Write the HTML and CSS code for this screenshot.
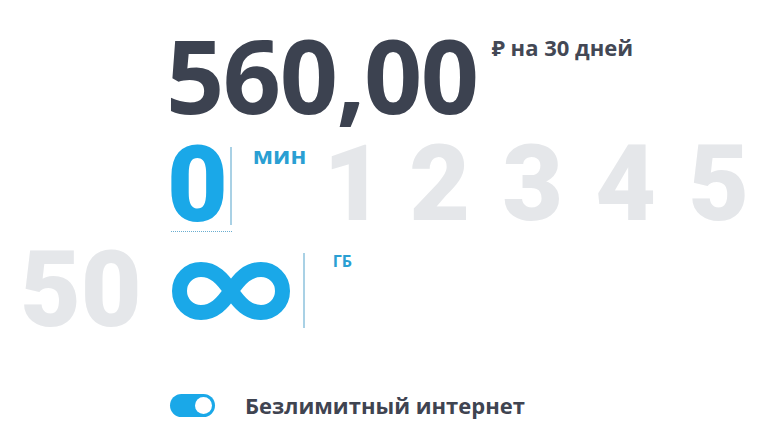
FILE: index.html
```html
<!DOCTYPE html>
<html lang="ru">
<head>
<meta charset="utf-8">
<title>Тариф</title>
<link rel="stylesheet" href="styles.css">
</head>
<body>
<div class="page">
  <div class="price-row">
    <span class="price">560,00</span>
    <span class="period">₽ на 30 дней</span>
  </div>

  <div class="picker picker-min">
    <div class="selected">
      <span class="num num-sel">0</span>
      <span class="bar"></span>
    </div>
    <span class="unit unit-min">мин</span>
    <div class="options">
      <span class="opt opt-one num">1</span>
      <span class="opt num">2</span>
      <span class="opt num">3</span>
      <span class="opt num">4</span>
      <span class="opt num">5</span>
    </div>
  </div>

  <div class="picker picker-gb">
    <span class="num num-prev">50</span>
    <span class="inf">
      <svg width="118" height="58" viewBox="0 0 118 58" aria-hidden="true">
        <path d="M59,29 C50,16 42,7.5 29,7.5 C17,7.5 7.5,17 7.5,29 C7.5,41 17,50.5 29,50.5 C42,50.5 50,42 59,29 C68,16 76,7.5 89,7.5 C101,7.5 110.5,17 110.5,29 C110.5,41 101,50.5 89,50.5 C76,50.5 68,42 59,29 Z" fill="none" stroke="#1aa8e8" stroke-width="15" stroke-linejoin="round"/>
      </svg>
    </span>
    <span class="bar bar-gb"></span>
    <span class="unit unit-gb">ГБ</span>
  </div>

  <div class="toggle-row">
    <span class="toggle"><span class="knob"></span></span>
    <span class="toggle-label">Безлимитный интернет</span>
  </div>
</div>
</body>
</html>
```

FILE: styles.css
```css
html, body {
  margin: 0;
  padding: 0;
  background: #ffffff;
}

.page {
  width: 778px;
  height: 436px;
  overflow: hidden;
  font-family: "Open Sans", "Noto Sans", sans-serif;
  color: #3c4250;
}

.price-row {
  display: flex;
  align-items: flex-start;
  margin-top: 24px;
  padding-left: 166px;
}

.price {
  font-size: 102px;
  line-height: 102px;
  font-weight: 700;
  letter-spacing: -1.5px;
}

.period {
  font-size: 22px;
  line-height: 22px;
  font-weight: 700;
  margin-top: 12px;
  margin-left: 14px;
  color: #434855;
}

.picker {
  display: flex;
  align-items: flex-start;
}

.num {
  font-family: Roboto, "Liberation Sans", sans-serif;
  font-weight: 900;
  font-size: 105px;
  line-height: 76px;
  color: #e5e7ea;
}

.picker-min {
  margin-top: 21px;
}

.selected {
  display: flex;
  align-items: flex-start;
  margin-left: 171px;
  padding-bottom: 6px;
  border-bottom: 1px dotted #6aaed0;
}

.num-sel {
  color: #1aa8e8;
  margin-top: 1px;
  margin-left: -4px;
}

.bar {
  width: 2px;
  height: 78px;
  background: #a9d1e5;
  margin-left: 2px;
}

.unit {
  font-weight: 700;
  color: #2a9fd3;
}

.unit-min {
  font-size: 24px;
  line-height: 24px;
  margin-top: -4px;
  margin-left: 21px;
}

.options {
  display: flex;
}

.opt {
  width: 93px;
  text-align: center;
}

.options .opt:first-child {
  margin-left: -6px;
}

.opt-one {
  padding-left: 14px;
  box-sizing: border-box;
}

.picker-gb {
  margin-top: 21px;
}

.num-prev {
  margin-left: 20px;
}

.inf {
  display: block;
  margin-left: 30px;
  margin-top: 9px;
  height: 58px;
}

.inf svg {
  display: block;
}

.bar-gb {
  height: 75px;
  margin-left: 13px;
}

.unit-gb {
  font-size: 16px;
  line-height: 16px;
  margin-top: 0;
  margin-left: 28px;
}

.toggle-row {
  display: flex;
  align-items: center;
  margin-top: 65px;
  padding-left: 170px;
}

.toggle {
  display: flex;
  align-items: center;
  justify-content: flex-end;
  width: 45px;
  height: 23px;
  border-radius: 12px;
  background: #1aa8e8;
  padding-right: 3px;
  box-sizing: border-box;
}

.knob {
  width: 17px;
  height: 17px;
  border-radius: 50%;
  background: #ffffff;
}

.toggle-label {
  font-size: 22px;
  line-height: 23px;
  font-weight: 700;
  margin-left: 30px;
  color: #3f4451;
}
```
